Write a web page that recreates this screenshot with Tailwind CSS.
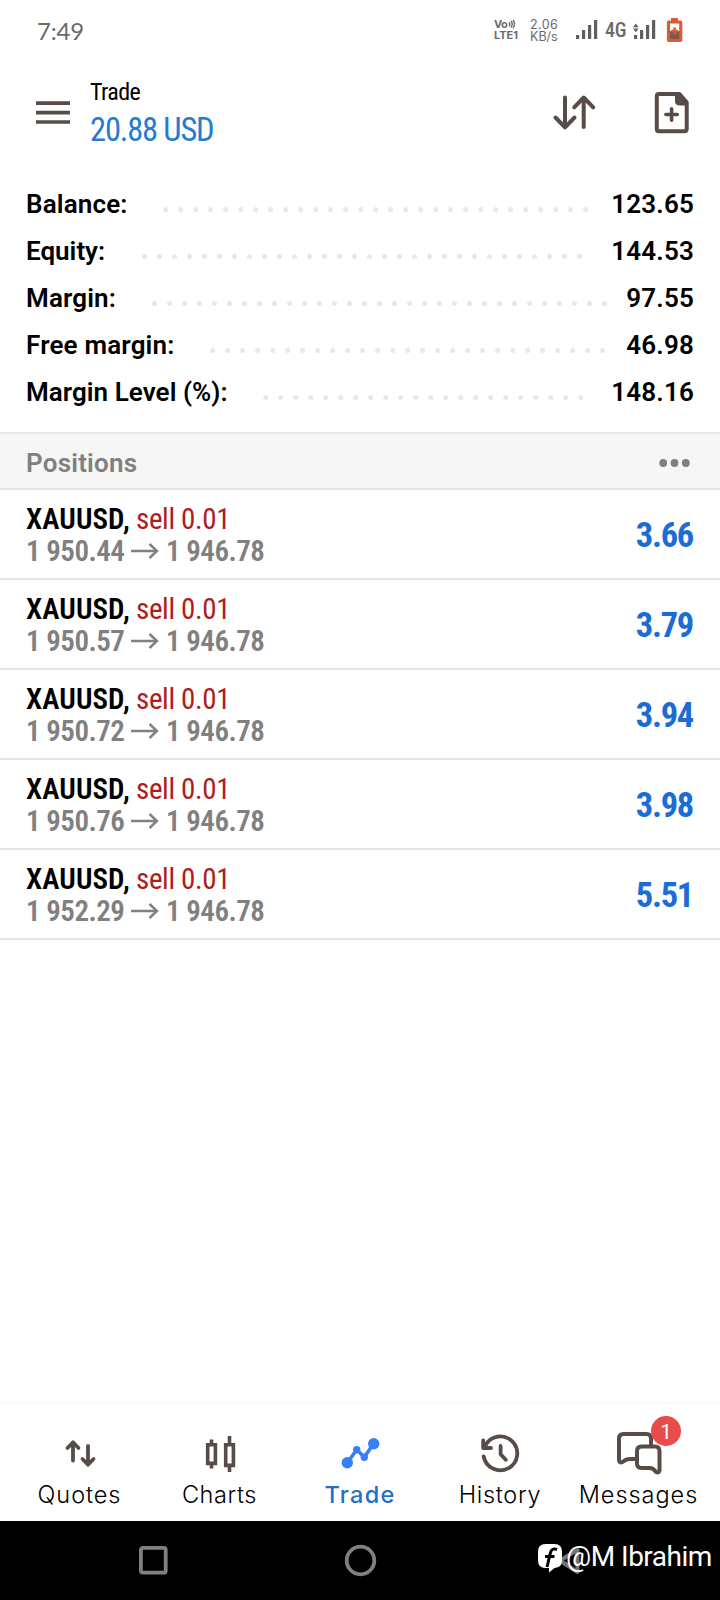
<!DOCTYPE html>
<html lang="en">
<head>
<meta charset="utf-8">
<title>Trade</title>
<script src="https://cdn.jsdelivr.net/npm/@tailwindcss/browser@4"></script>
</head>
<body class="bg-white">
<div class="flex h-[1600px] w-[720px] flex-col overflow-hidden bg-white font-['Roboto',sans-serif] text-black">

  <!-- Status bar -->
  <header class="flex h-[60px] shrink-0 items-start pl-[37px] text-[#6a6a6a]">
    <span class="mt-[15px] w-[457px] font-['Lato',sans-serif] text-[24px] leading-[32px] tracking-[-0.2px]">7:49</span>
    <div class="mt-[19px] w-[36px] font-['Inter',sans-serif] text-[11px] font-bold leading-[10px]">
      <div class="flex h-[10px] items-center tracking-[-0.6px]">Vo<svg class="ml-px" width="9" height="10" viewBox="0 0 9 10" fill="none" stroke="currentColor" stroke-width="1.4"><path d="M1 3.2Q2.6 5 1 7.4M3 2Q5.4 5 3 8.6M5 1Q8 5 5 9.4"/></svg></div>
      <div class="mt-px">LTE1</div>
    </div>
    <div class="mt-[19px] w-[46px] font-['Inter',sans-serif] text-[12.5px] leading-[12px]">
      <div class="tracking-[0.4px]">2.06</div>
      <div>KB/s</div>
    </div>
    <svg class="mt-[20px]" width="24" height="20" viewBox="0 0 24 20" fill="#5f5f5f"><path d="M0 15h3.2v4H0zM6 10h3.2v9H6zM12 5h3.2v14H12zM18 0h3.2v19H18z"/></svg>
    <span class="ml-[5px] mt-[18px] w-[28px] font-['Roboto_Condensed','Roboto',sans-serif] text-[20px] font-medium leading-[24px] tracking-[-0.2px]">4G</span>
    <svg class="mt-[20px]" width="24" height="20" viewBox="633 20 24 20" fill="#5f5f5f"><path d="M634 35h3.2v4H634zM640 30h3.2v9H640zM646 25h3.2v14H646zM652 20h3.2v19H652zM633 27.3l2.8-3.8 2.8 3.8zM633 28.5l2.8 3.8 2.8-3.8z"/></svg>
    <svg class="ml-[9px] mt-[17px]" width="18" height="26" viewBox="666 17 18 26"><path d="M671 18h7v2.500h2.500q1.800 0 1.800 1.800v18q0 1.700-1.700 1.700h-12q-1.700 0-1.700-1.700v-18q0-1.800 1.800-1.800h2.300z" fill="#de5b30"/><path d="M670 23.500h9.200v8H670z" fill="#fff"/><path d="M670 31h9.200v8H670z" fill="#7c5a50"/><path d="M674.600 27.500v7M671.200 31h6.800" stroke="#de5b30" stroke-width="2.600"/></svg>
  </header>

  <!-- App bar -->
  <div class="flex h-[121px] shrink-0 items-start pl-[36px] text-[#574c47]">
    <svg class="mt-[40px]" width="34" height="26" viewBox="36 100 34 26" stroke="currentColor" stroke-width="3.700"><path d="M36 103.200h34M36 112.700h34M36 122h34"/></svg>
    <div class="ml-[20px] mt-[16px] w-[460px] font-['Roboto_Condensed','Roboto',sans-serif]">
      <h1 class="text-[24px] leading-[32px] tracking-[-0.6px] text-black">Trade</h1>
      <p class="mt-[2px] text-[32.5px] leading-[40px] tracking-[-1.15px] text-[#237bd3]">20.88 USD</p>
    </div>
    <svg class="mt-[32px]" width="48" height="40" viewBox="550 92 48 40" fill="none" stroke="currentColor" stroke-width="4" stroke-linecap="round" stroke-linejoin="round"><path d="M565 97.500V127M555.500 117.500L565 127.300 574.500 117.500M583.700 127V98M574.200 107.300L583.700 97.500 593.200 107.300"/></svg>
    <svg class="ml-[54px] mt-[30px]" width="40" height="46" viewBox="652 90 40 46" fill="none" stroke="currentColor"><path d="M659 94h20.500l7.200 8.300V129q0 2.200-2.200 2.200H659q-2.200 0-2.200-2.200V96.200Q656.800 94 659 94z" stroke-width="4" stroke-linejoin="round"/><path d="M675 94h5l7.500 8.500v3H679q-4-.5-4-4z" fill="currentColor" stroke="none"/><path d="M671.600 108.800v11.400M665.900 114.500h11.400" stroke-width="3.600" stroke-linecap="round"/></svg>
  </div>

  <!-- Account summary -->
  <dl class="flex h-[251px] shrink-0 flex-col text-[26px] font-semibold leading-[47px]">
    <div class="flex h-[47px] items-start pl-[26px] pr-[26px]"><dt class="w-[137px] tracking-[0.15px]">Balance:</dt><svg class="mt-[26px]" width="425" height="5" stroke="#e8e8e8" stroke-width="5" stroke-linecap="round" stroke-dasharray="0 15"><path d="M2.700 2.500H423"/></svg><dd class="ml-auto tracking-[0.2px]">123.65</dd></div>
    <div class="flex h-[47px] items-start pl-[26px] pr-[26px]"><dt class="w-[116px]">Equity:</dt><svg class="mt-[26px]" width="440" height="5" stroke="#e8e8e8" stroke-width="5" stroke-linecap="round" stroke-dasharray="0 15"><path d="M2.500 2.500H438"/></svg><dd class="ml-auto tracking-[0.2px]">144.53</dd></div>
    <div class="flex h-[47px] items-start pl-[26px] pr-[26px]"><dt class="w-[126px] tracking-[0.15px]">Margin:</dt><svg class="mt-[26px]" width="455" height="5" stroke="#e8e8e8" stroke-width="5" stroke-linecap="round" stroke-dasharray="0 15"><path d="M2.500 2.500H453"/></svg><dd class="ml-auto tracking-[0.2px]">97.55</dd></div>
    <div class="flex h-[47px] items-start pl-[26px] pr-[26px]"><dt class="w-[184px] tracking-[0.18px]">Free margin:</dt><svg class="mt-[26px]" width="395" height="5" stroke="#e8e8e8" stroke-width="5" stroke-linecap="round" stroke-dasharray="0 15"><path d="M2.700 2.500H393"/></svg><dd class="ml-auto tracking-[0.2px]">46.98</dd></div>
    <div class="flex h-[47px] items-start pl-[26px] pr-[26px]"><dt class="w-[237px] tracking-[0.05px]">Margin Level (%):</dt><svg class="mt-[26px]" width="320" height="5" stroke="#e8e8e8" stroke-width="5" stroke-linecap="round" stroke-dasharray="0 15"><path d="M2.700 2.500H318"/></svg><dd class="ml-auto tracking-[0.2px]">148.16</dd></div>
  </dl>

  <!-- Positions heading -->
  <div class="flex h-[58px] shrink-0 items-center justify-between border-y-2 border-[#e5e5e5] bg-[#f6f6f6] pl-[26px] pr-[29px] text-[#808080]">
    <h2 class="pt-[3px] text-[26px] font-semibold leading-[40px] tracking-[0.2px]">Positions</h2>
    <svg class="mt-[3px]" width="32" height="8" viewBox="0 0 32 8" fill="currentColor"><circle cx="4.200" cy="4" r="3.900"/><circle cx="15.500" cy="4" r="3.900"/><circle cx="26.800" cy="4" r="3.900"/></svg>
  </div>

  <!-- Positions -->
  <ul id="positions" class="font-['Roboto_Condensed','Roboto',sans-serif]"></ul>
  <template id="position">
    <li class="flex h-[90px] items-start justify-between border-b-2 border-[#e5e5e5] pl-[26px] pr-[27px]">
      <div class="pt-[13px] text-[29px] leading-[32px]">
        <div class="flex"><span class="w-[110px] font-semibold tracking-[0.1px]">XAUUSD,</span><span class="tracking-[-0.35px] text-[#b01c1c]">sell 0.01</span></div>
        <div class="flex font-semibold tracking-[-0.5px] text-[#808080]"><span data-open class="w-[105px]"></span><svg class="mt-[8px]" width="28" height="16" viewBox="0 0 28 16" fill="none" stroke="currentColor" stroke-width="2.400"><path d="M0 8h26M18.500 1L26 8l-7.500 7"/></svg><span class="ml-[7px]">1 946.78</span></div>
      </div>
      <span data-profit class="pt-px text-[34.5px] font-bold leading-[89px] tracking-[-1.3px] text-[#1a6dd6]"></span>
    </li>
  </template>

  <div class="grow"></div>

  <!-- Tab bar -->
  <nav class="grid h-[119px] shrink-0 grid-cols-5 border-t-[3px] border-[#f9f9f9] px-[10px] pt-[27px] font-['Inter',sans-serif] text-[23.5px] leading-[32px]">
    <a class="flex flex-col items-center text-[#574c47]">
      <svg width="140" height="46" viewBox="10 1432 140 46" fill="none" stroke="currentColor" stroke-width="3.800" stroke-linecap="round" stroke-linejoin="round"><path d="M73 1460.500V1443M67.500 1448L73 1442.300 78.500 1448M88 1446v18M82.500 1459L88 1464.700 93.500 1459"/></svg>
      <span class="mt-px mr-[1px] font-[350] tracking-[0.95px] text-black">Quotes</span>
    </a>
    <a class="flex flex-col items-center text-[#574c47]">
      <svg width="140" height="46" viewBox="150 1432 140 46" fill="none" stroke="currentColor" stroke-width="3.600"><path d="M207.700 1444.700h7.700v18.700h-7.700zM225.700 1444.700h7.700v20.700h-7.700zM211.500 1439.500v5M211.500 1464v4.500M229.500 1436v8M229.500 1466v6"/></svg>
      <span class="mt-px mr-[1px] font-[350] tracking-[0.6px] text-black">Charts</span>
    </a>
    <a class="flex flex-col items-center text-[#367ff7]">
      <svg width="140" height="46" viewBox="290 1432 140 46" fill="currentColor"><path d="M347.300 1462.700L356.700 1449.700 364.300 1457 373.700 1443.700" fill="none" stroke="currentColor" stroke-width="3.600"/><circle cx="347.300" cy="1462.700" r="5.700"/><circle cx="356.700" cy="1449.700" r="3.700"/><circle cx="364.300" cy="1457.300" r="3.700"/><circle cx="373.700" cy="1443.700" r="5.700"/></svg>
      <span class="mt-px font-[450] tracking-[1.3px] text-[#1f70c8]">Trade</span>
    </a>
    <a class="flex flex-col items-center text-[#574c47]">
      <svg width="140" height="46" viewBox="430 1432 140 46" fill="none" stroke="currentColor" stroke-width="3.800" stroke-linecap="round" stroke-linejoin="round"><path d="M483.700 1456.300A16.900 16.900 0 1 0 485.300 1445.700M483.200 1440.500V1448H491M500.600 1446v8.300l5.200 5.400"/></svg>
      <span class="mt-px font-[350] tracking-[0.7px] text-black">History</span>
    </a>
    <a class="relative flex flex-col items-center text-[#574c47]">
      <svg width="140" height="46" viewBox="570 1432 140 46" fill="none" stroke="currentColor" stroke-width="4" stroke-linecap="round" stroke-linejoin="round"><path d="M651 1444v-5.500q0-4.500-4.500-4.500H623.500q-4.500 0-4.500 4.500V1460q0 3.500 3.500 2 3.500-3 7-3H636"/><path d="M641.500 1446.500h13.500q4.500 0 4.500 4.500V1470q0 3.500-3.500 2-2.500-4-6.500-4H641.500q-4.500 0-4.500-4.500V1451q0-4.500 4.500-4.500z"/></svg>
      <span class="mt-px mr-[3px] font-[350] tracking-[0.95px] text-black">Messages</span>
      <span class="absolute left-[81px] top-[-16px] flex size-[30px] items-center justify-center rounded-full bg-[#e84c4b] pt-[2px] font-['Roboto',sans-serif] text-[20px] leading-[30px] text-white">1</span>
    </a>
  </nav>

  <!-- System navigation -->
  <footer class="relative flex h-[79px] shrink-0 items-start bg-black">
    <svg class="ml-[138px] mt-[24px]" width="31" height="31" fill="none" stroke="#808080" stroke-width="3.800"><rect x="2.900" y="2.900" width="24.800" height="24.800" rx="2"/></svg>
    <svg class="ml-[175px] mt-[23px]" width="33" height="33" fill="none" stroke="#808080" stroke-width="3.800"><circle cx="16.500" cy="16.500" r="13.800"/></svg>
    <svg class="ml-[180px] mt-[24px]" width="28" height="32" viewBox="557 1545 28 32" fill="none" stroke="#757575" stroke-width="4" stroke-linejoin="round"><path d="M560 1560.500L577.500 1550V1572z"/></svg>
    <div class="absolute left-[537px] top-[20px] flex items-start text-white">
      <svg class="mt-[2px]" width="26" height="32" viewBox="537 1543 26 32"><path d="M545.500 1544h9q7.500 0 7.500 7.500v9q0 7-7.500 7.500L549 1572.500V1568h-3.500q-7.500 0-7.500-7.500v-9q0-7.500 7.500-7.500z" fill="#fff"/><path d="M557 1549.500q-5-2-6.500 3L547 1567M545 1556.500h9.500" fill="none" stroke="#000" stroke-width="3"/></svg>
      <span class="ml-[3px] text-[28px] leading-[31px] tracking-[-0.5px]">@M Ibrahim</span>
    </div>
  </footer>
</div>
<script>
  const rows = [["1 950.44", "3.66"], ["1 950.57", "3.79"], ["1 950.72", "3.94"], ["1 950.76", "3.98"], ["1 952.29", "5.51"]];
  const list = document.getElementById("positions");
  const tpl = document.getElementById("position");
  for (const [open, profit] of rows) {
    const n = tpl.content.cloneNode(true);
    n.querySelector("[data-open]").textContent = open;
    n.querySelector("[data-profit]").textContent = profit;
    list.append(n);
  }
</script>
</body>
</html>
